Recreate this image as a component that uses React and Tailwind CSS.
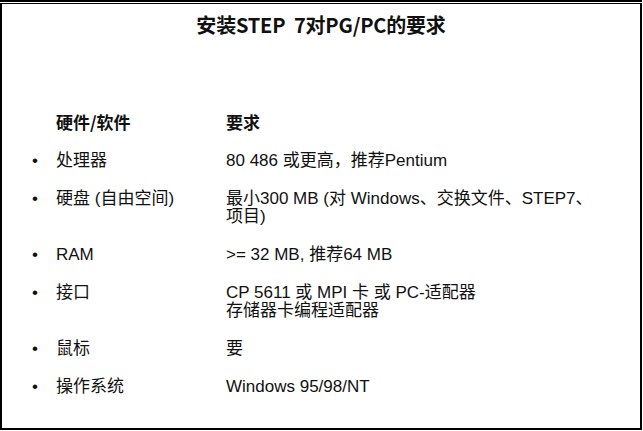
export default function App() {
  const rows = [
    { label: "处理器", value: ["80 486 或更高，推荐Pentium"] },
    { label: "硬盘 (自由空间)", value: ["最小300 MB (对 Windows、交换文件、STEP7、", "项目)"] },
    { label: "RAM", value: [">= 32 MB, 推荐64 MB"] },
    { label: "接口", value: ["CP 5611 或 MPI 卡 或 PC-适配器", "存储器卡编程适配器"] },
    { label: "鼠标", value: ["要"] },
    { label: "操作系统", value: ["Windows 95/98/NT"] },
  ];
  return (
    <div
      className="w-[643px] h-[431px] bg-white flex flex-col pr-px pb-px"
      style={{ fontFamily: '"Liberation Sans", "Noto Sans CJK SC", sans-serif' }}
    >
      <div className="h-[2px] bg-black" />
      <div className="h-px bg-white" />
      <div className="flex-1 flex flex-col border-t border-l-2 border-r-2 border-b-2 border-black text-[#111]">
        <div className="h-[42px] flex items-center justify-center">
          <div
            className="text-[20px] font-bold tracking-[-0.2px] leading-none"
            style={{ fontFamily: '"Noto Sans CJK SC", sans-serif' }}
          >
            安装STEP&nbsp;&nbsp;7对PG/PC的要求
          </div>
        </div>
        <div className="pl-[54px] pt-[67px] flex text-[17px] font-bold leading-[18px]">
          <div className="w-[170px]" style={{ fontFamily: '"Noto Sans CJK SC", sans-serif' }}>硬件/软件</div>
          <div style={{ fontFamily: '"Noto Sans CJK SC", sans-serif' }}>要求</div>
        </div>
        <div className="flex flex-col gap-[20px] pt-[21px] text-[17px] leading-[18px]">
          {rows.map((r, i) => (
            <div key={i} className="flex">
              <div className="w-[54px] pl-[30px]">•</div>
              <div className="w-[170px]">{r.label}</div>
              <div className="flex flex-col">
                {r.value.map((v, j) => (
                  <div key={j}>{v}</div>
                ))}
              </div>
            </div>
          ))}
        </div>
      </div>
    </div>
  );
}
